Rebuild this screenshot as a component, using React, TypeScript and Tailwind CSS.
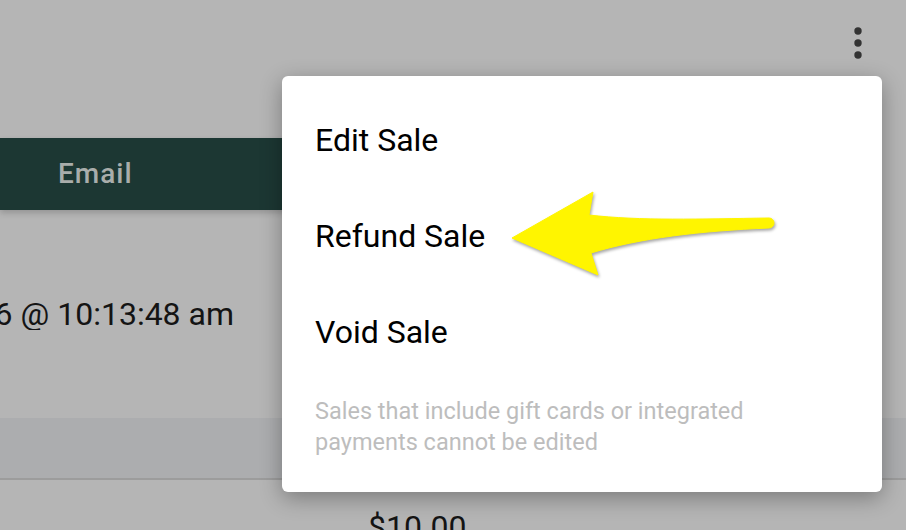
import React from 'react'

const menuItems = ['Edit Sale', 'Refund Sale', 'Void Sale']

function KebabIcon() {
  return (
    <svg width="48" height="48" viewBox="0 0 24 24" fill="#333333">
      <circle cx="12" cy="6" r="1.85" />
      <circle cx="12" cy="12" r="1.85" />
      <circle cx="12" cy="18" r="1.85" />
    </svg>
  )
}

function Arrow() {
  return (
    <svg
      className="absolute left-0 top-0 pointer-events-none"
      width="906"
      height="530"
      viewBox="0 0 906 530"
      style={{ filter: 'drop-shadow(1.5px 2px 1.5px rgba(0,0,0,0.35))' }}
    >
      <path
        d="M512,238 L593,192 L589,215 C640,221 700,219 769,218 A5,5 0 0 1 769,228 C700,231 640,238 591,253 L598,275 Z"
        fill="#fff500"
        stroke="#fff500"
        strokeWidth="1"
        strokeLinejoin="round"
      />
    </svg>
  )
}

export default function App() {
  return (
    <div
      className="relative w-[906px] h-[530px] overflow-hidden bg-[#b5b5b5]"
      style={{ fontFamily: 'Roboto, "Liberation Sans", sans-serif' }}
    >
      {/* Top bar with overflow menu */}
      <div className="h-[138px] flex justify-end items-start pt-[19px] pr-[24px]">
        <KebabIcon />
      </div>

      {/* Table header */}
      <div className="h-[72px] w-[860px] bg-[#1c3733] flex items-center pl-[58px] shadow-[0_3px_6px_rgba(0,0,0,0.18)]">
        <span className="text-[28px] leading-[28px] font-medium tracking-[1px] text-[#a9adab]">Email</span>
      </div>

      {/* Sale row */}
      <div className="h-[208px] flex items-center">
        <div className="w-[234px] flex justify-end overflow-hidden">
          <span className="whitespace-nowrap text-[32px] leading-[32px] text-[#141414]">
            Mar 16, 2016 @ 10:13:48 am
          </span>
        </div>
      </div>

      <div className="h-[62px] bg-[#acadaf] border-b-2 border-[#9c9c9c]" />

      <div className="pt-[31px] pl-[368px]">
        <span className="text-[32px] leading-[32px] text-[#141414]">$10.00</span>
      </div>

      {/* Dropdown menu */}
      <div className="absolute left-[282px] top-[76px] w-[600px] h-[416px] bg-white rounded-[6px] shadow-[0_6px_22px_rgba(0,0,0,0.32)] pt-[16px] pl-[33px]">
        {menuItems.map((item) => (
          <div key={item} className="h-[96px] flex items-center">
            <span className="text-[32px] leading-[32px] text-black">{item}</span>
          </div>
        ))}
        <p className="mt-[16px] w-[480px] text-[23.5px] leading-[31px] text-[#bdbdbd]">
          Sales that include gift cards or integrated payments cannot be edited
        </p>
      </div>

      <Arrow />
    </div>
  )
}
